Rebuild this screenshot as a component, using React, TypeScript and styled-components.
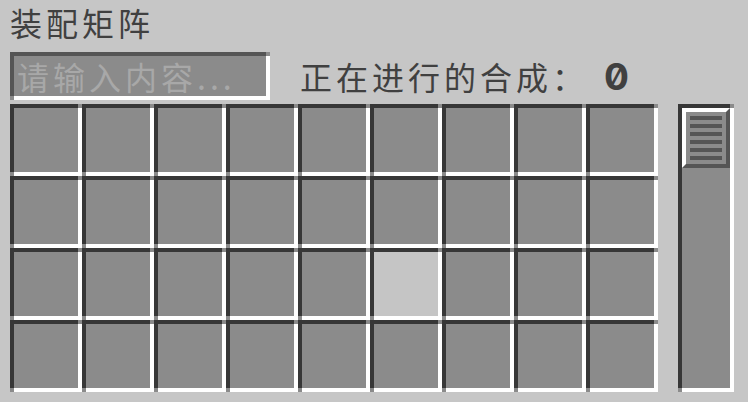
import React from 'react';
import styled, { createGlobalStyle, css } from 'styled-components';

const GlobalStyle = createGlobalStyle`
  html, body {
    margin: 0;
    padding: 0;
    background: #c6c6c6;
  }
  body {
    width: 748px;
    height: 402px;
    overflow: hidden;
    font-family: "Noto Sans CJK SC", "Noto Sans", sans-serif;
  }
`;

const corners = (color: string) => css`
  &::before,
  &::after {
    content: '';
    position: absolute;
    width: 4px;
    height: 4px;
    background: ${color};
  }
  &::before {
    top: -4px;
    right: -4px;
  }
  &::after {
    bottom: -4px;
    left: -4px;
  }
`;

const Panel = styled.div`
  width: 748px;
  height: 402px;
  box-sizing: border-box;
  padding: 6px 0 0 10px;
  display: flex;
  flex-direction: column;
  background: #c6c6c6;
`;

const Title = styled.h1`
  margin: 0;
  height: 32px;
  font-size: 32px;
  line-height: 32px;
  font-weight: 400;
  color: #404040;
  letter-spacing: 4px;
`;

const Toolbar = styled.div`
  margin-top: 14px;
  height: 48px;
  display: flex;
  align-items: center;
  gap: 30px;
`;

const SearchBox = styled.label`
  position: relative;
  width: 260px;
  height: 48px;
  box-sizing: border-box;
  border: 4px solid;
  border-color: #555555 #ffffff #ffffff #555555;
  background: #8b8b8b;
  display: flex;
  align-items: center;
  ${corners('#8b8b8b')}
`;

const SearchInput = styled.input`
  width: 100%;
  height: 40px;
  box-sizing: border-box;
  padding: 0 0 0 3px;
  margin: 0;
  border: none;
  outline: none;
  background: transparent;
  font-family: "Noto Sans CJK SC", "Noto Sans", sans-serif;
  font-size: 32px;
  letter-spacing: 4px;
  color: #e0e0e0;
  &::placeholder {
    color: #a8a8a8;
    opacity: 1;
  }
`;

const Status = styled.div`
  font-size: 32px;
  line-height: 40px;
  letter-spacing: 4px;
  color: #404040;
  white-space: nowrap;
`;

const Count = styled.span`
  margin-left: 16px;
  font-family: Inter, "DejaVu Sans Mono", monospace;
  font-weight: 700;
  font-size: 37px;
  letter-spacing: 0;
  font-variant-numeric: slashed-zero;
  font-feature-settings: "zero" 1;
  color: #404040;
`;

const MainRow = styled.div`
  margin-top: 4px;
  display: flex;
  gap: 20px;
`;

const SlotGrid = styled.div`
  display: grid;
  grid-template-columns: repeat(9, 72px);
  grid-auto-rows: 72px;
`;

const Slot = styled.div<{ $active?: boolean }>`
  position: relative;
  box-sizing: border-box;
  border: 4px solid;
  border-color: #373737 #ffffff #ffffff #373737;
  background: ${(p) => (p.$active ? '#c5c5c5' : '#8b8b8b')};
  ${corners('#8b8b8b')}
`;

const Track = styled.div`
  position: relative;
  width: 56px;
  height: 288px;
  box-sizing: border-box;
  border: 4px solid;
  border-color: #373737 #ffffff #ffffff #373737;
  background: #8b8b8b;
  ${corners('#8b8b8b')}
`;

const Thumb = styled.div`
  width: 48px;
  height: 60px;
  box-sizing: border-box;
  border: 4px solid;
  border-color: #ffffff #555555 #555555 #ffffff;
  background: #8b8b8b;
  padding: 4px;
  display: flex;
  flex-direction: column;
  gap: 4px;
`;

const Grip = styled.div`
  height: 4px;
  background: #555555;
`;

const COLS = 9;
const ROWS = 4;
const ACTIVE = 2 * COLS + 5;

export default function App() {
  return (
    <>
      <GlobalStyle />
      <Panel>
        <Title>装配矩阵</Title>
        <Toolbar>
          <SearchBox>
            <SearchInput placeholder="请输入内容..." />
          </SearchBox>
          <Status>
            正在进行的合成：<Count>0</Count>
          </Status>
        </Toolbar>
        <MainRow>
          <SlotGrid>
            {Array.from({ length: COLS * ROWS }, (_, i) => (
              <Slot key={i} $active={i === ACTIVE} />
            ))}
          </SlotGrid>
          <Track>
            <Thumb>
              {Array.from({ length: 6 }, (_, i) => (
                <Grip key={i} />
              ))}
            </Thumb>
          </Track>
        </MainRow>
      </Panel>
    </>
  );
}
